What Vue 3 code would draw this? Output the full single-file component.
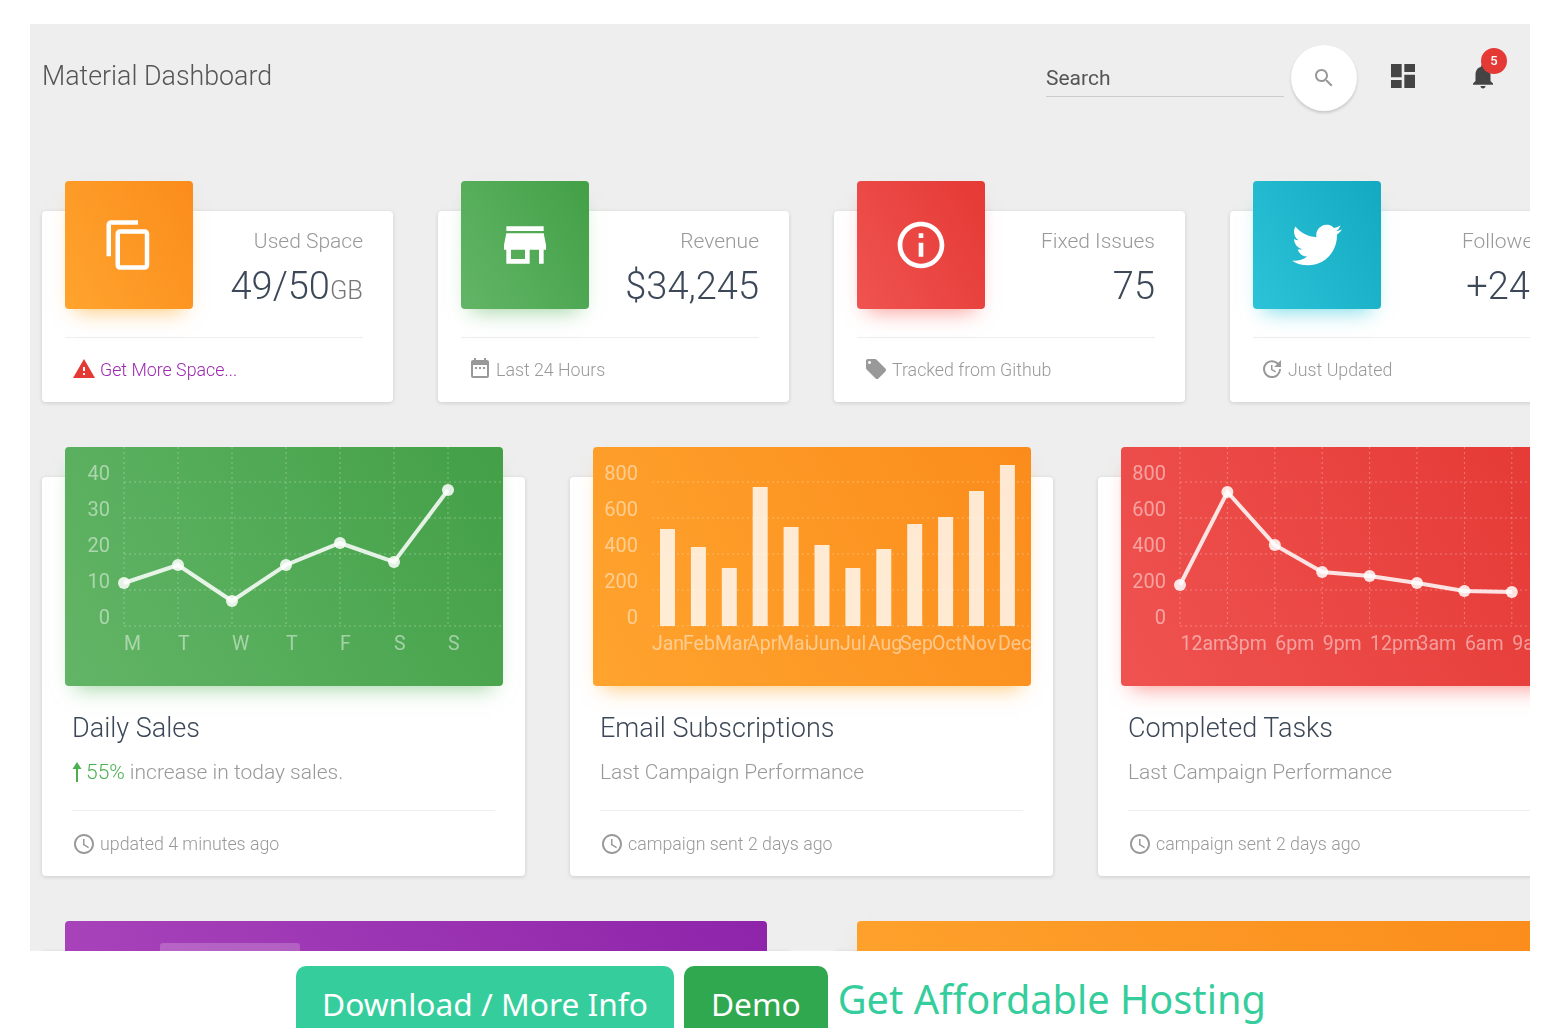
<template>
  <div class="page">
    <div class="panel">
      <nav class="topbar">
        <div class="brand">Material Dashboard</div>
        <div class="search">
          <span class="search-input">Search</span>
          <button class="search-btn">
            <svg viewBox="0 0 24 24" width="24" height="24"><path :d="icons.search" /></svg>
          </button>
        </div>
        <svg class="nav-icon dash" viewBox="0 0 24 24" width="32" height="32"><path :d="icons.dashboard" /></svg>
        <div class="bell">
          <svg class="nav-icon" viewBox="0 0 24 24" width="30" height="30"><path :d="icons.bell" /></svg>
          <span class="badge">5</span>
        </div>
      </nav>

      <section class="stats">
        <div v-for="s in stats" :key="s.label" class="card stat">
          <div class="stat-top">
            <div class="stat-icon" :class="s.color">
              <svg viewBox="0 0 24 24" :width="s.size" :height="s.size"><path :d="s.icon" /></svg>
            </div>
            <div class="stat-text">
              <p class="stat-label">{{ s.label }}</p>
              <h3 class="stat-value">{{ s.value }}<small v-if="s.unit">{{ s.unit }}</small></h3>
            </div>
          </div>
          <div class="foot">
            <svg viewBox="0 0 24 24" width="24" height="24" :class="{ warn: s.warn }"><path :d="s.footIcon" /></svg>
            <span :class="{ link: s.warn }">{{ s.foot }}</span>
          </div>
        </div>
      </section>

      <section class="charts">
        <div v-for="c in charts" :key="c.title" class="card chart-card">
          <div class="chart-head" :class="c.color">
            <svg class="plot" viewBox="0 0 438 239" width="438" height="239">
              <line v-for="y in gridY" :key="'h' + y" x1="59" x2="438" :y1="y" :y2="y" class="grid" />
              <template v-if="c.points">
                <line v-for="x in c.xs" :key="'v' + x" :x1="x" :x2="x" y1="0" y2="179" class="grid" />
                <polyline :points="linePoints(c)" class="line" />
                <circle v-for="(p, i) in c.points" :key="i" :cx="c.xs[i]" :cy="p" r="6" class="dot" />
              </template>
              <template v-if="c.bars">
                <rect v-for="(b, i) in c.bars" :key="i" :x="c.xs[i] - 7.5" :y="b" width="15" :height="179 - b" class="bar" />
              </template>
              <text v-for="(t, i) in c.yLabels" :key="t" x="45" :y="33 + i * 36" text-anchor="end" class="axis">{{ t }}</text>
              <text v-for="(t, i) in c.xLabels" :key="i" :x="c.labelXs[i]" y="203" class="axis axis-x">{{ t }}</text>
            </svg>
          </div>
          <div class="chart-body">
            <h4 class="chart-title">{{ c.title }}</h4>
            <p class="chart-sub">
              <template v-if="c.up">
                <svg class="up" viewBox="0 0 10 20" width="10" height="20"><path d="M5 0L9.500 7H6V20H4V7H.5z" /></svg>
                <span class="pct">55%</span> increase in today sales.
              </template>
              <template v-else>{{ c.sub }}</template>
            </p>
          </div>
          <div class="foot chart-foot">
            <svg viewBox="0 0 24 24" width="24" height="24"><path :d="icons.clock" /></svg>
            <span>{{ c.foot }}</span>
          </div>
        </div>
      </section>

      <section class="lower">
        <div class="card lower-card"><div class="lower-head purple"><span class="tab"></span></div></div>
        <div class="card lower-card"><div class="lower-head orange"></div></div>
      </section>
    </div>

    <div class="promo">
      <a class="btn btn-teal">Download / More Info</a>
      <a class="btn btn-green">Demo</a>
      <a class="hosting">Get Affordable Hosting</a>
    </div>
  </div>
</template>

<script setup>
const icons = {
  search: 'M15.5 14h-.79l-.28-.27C15.41 12.59 16 11.11 16 9.5 16 5.91 13.09 3 9.5 3S3 5.91 3 9.5 5.91 16 9.5 16c1.61 0 3.09-.59 4.23-1.57l.27.28v.79l5 4.99L20.49 19l-4.99-5zm-6 0C7.01 14 5 11.99 5 9.500S7.01 5 9.5 5 14 7.01 14 9.500 11.99 14 9.5 14z',
  dashboard: 'M3 13h8V3H3v10zm0 8h8v-6H3v6zm10 0h8V11h-8v10zm0-18v6h8V3h-8z',
  bell: 'M12 22c1.1 0 2-.9 2-2h-4c0 1.1.9 2 2 2zm6-6v-5c0-3.07-1.63-5.64-4.5-6.32V4c0-.83-.67-1.5-1.5-1.5s-1.5.67-1.5 1.5v.68C7.64 5.36 6 7.92 6 11v5l-2 2v1h16v-1l-2-2z',
  copy: 'M16 1H4c-1.1 0-2 .9-2 2v14h2V3h12V1zm3 4H8c-1.1 0-2 .9-2 2v14c0 1.1.9 2 2 2h11c1.1 0 2-.9 2-2V7c0-1.1-.9-2-2-2zm0 16H8V7h11v14z',
  store: 'M20 4H4v2h16V4zm1 10v-2l-1-5H4l-1 5v2h1v6h10v-6h4v6h2v-6h1zm-9 4H6v-4h6v4z',
  info: 'M11 17h2v-6h-2v6zm1-15C6.48 2 2 6.48 2 12s4.48 10 10 10 10-4.48 10-10S17.52 2 12 2zm0 18c-4.41 0-8-3.59-8-8s3.59-8 8-8 8 3.59 8 8-3.59 8-8 8zM11 9h2V7h-2v2z',
  twitter: 'M23.953 4.57a10 10 0 01-2.825.775 4.958 4.958 0 002.163-2.723c-.951.555-2.005.959-3.127 1.184a4.92 4.92 0 00-8.384 4.482C7.69 8.095 4.067 6.13 1.64 3.162a4.822 4.822 0 00-.666 2.475c0 1.71.87 3.213 2.188 4.096a4.904 4.904 0 01-2.228-.616v.06a4.923 4.923 0 003.946 4.827 4.996 4.996 0 01-2.212.085 4.936 4.936 0 004.604 3.417 9.867 9.867 0 01-6.102 2.105c-.39 0-.779-.023-1.17-.067a13.995 13.995 0 007.557 2.209c9.053 0 13.998-7.496 13.998-13.985 0-.21 0-.42-.015-.63A9.935 9.935 0 0024 4.59z',
  warning: 'M1 21h22L12 2 1 21zm12-3h-2v-2h2v2zm0-4h-2v-4h2v4z',
  calendar: 'M19 3h-1V1h-2v2H8V1H6v2H5c-1.11 0-1.99.9-1.99 2L3 19c0 1.1.89 2 2 2h14c1.1 0 2-.9 2-2V5c0-1.1-.9-2-2-2zm0 16H5V8h14v11zM9 10H7v2h2v-2zm4 0h-2v2h2v-2zm4 0h-2v2h2v-2z',
  tag: 'M21.41 11.58l-9-9C12.05 2.22 11.55 2 11 2H4c-1.1 0-2 .9-2 2v7c0 .55.22 1.05.59 1.42l9 9c.36.36.86.58 1.41.58.55 0 1.05-.22 1.41-.59l7-7c.37-.36.59-.86.59-1.41 0-.55-.23-1.06-.59-1.42zM5.5 7C4.67 7 4 6.33 4 5.5S4.67 4 5.5 4 7 4.67 7 5.5 6.33 7 5.5 7z',
  update: 'M21 10.12h-6.78l2.74-2.82c-2.73-2.7-7.15-2.8-9.88-.1-2.73 2.71-2.73 7.08 0 9.79 2.73 2.71 7.15 2.71 9.88 0C18.32 15.65 19 14.08 19 12.1h2c0 1.98-.88 4.55-2.64 6.29-3.51 3.48-9.21 3.48-12.72 0-3.5-3.47-3.53-9.11-.02-12.58 3.51-3.47 9.14-3.47 12.65 0L21 3v7.12zM12.5 8v4.25l3.5 2.08-.72 1.21L11 13V8h1.5z',
  clock: 'M11.99 2C6.47 2 2 6.48 2 12s4.47 10 9.99 10C17.52 22 22 17.52 22 12S17.52 2 11.99 2zM12 20c-4.42 0-8-3.58-8-8s3.58-8 8-8 8 3.58 8 8-3.58 8-8 8zm.5-13H11v6l5.25 3.15.75-1.23-4.5-2.67z'
}

const stats = [
  { label: 'Used Space', value: '49/50', unit: 'GB', color: 'orange', icon: icons.copy, size: 54, foot: 'Get More Space...', footIcon: icons.warning, warn: true },
  { label: 'Revenue', value: '$34,245', color: 'green', icon: icons.store, size: 56, foot: 'Last 24 Hours', footIcon: icons.calendar },
  { label: 'Fixed Issues', value: '75', color: 'red', icon: icons.info, size: 56, foot: 'Tracked from Github', footIcon: icons.tag },
  { label: 'Followers', value: '+245', color: 'blue', icon: icons.twitter, size: 50, foot: 'Just Updated', footIcon: icons.update }
]

const gridY = [35, 71, 107, 143, 179]

const step = (start, gap, n) => Array.from({ length: n }, (_, i) => start + gap * i)

const charts = [
  {
    title: 'Daily Sales',
    up: true,
    foot: 'updated 4 minutes ago',
    color: 'green',
    yLabels: [40, 30, 20, 10, 0],
    xs: step(59, 54, 7),
    labelXs: step(59, 54, 7),
    xLabels: ['M', 'T', 'W', 'T', 'F', 'S', 'S'],
    points: [136, 118, 154, 118, 96, 115, 43]
  },
  {
    title: 'Email Subscriptions',
    sub: 'Last Campaign Performance',
    foot: 'campaign sent 2 days ago',
    color: 'orange',
    yLabels: [800, 600, 400, 200, 0],
    xs: step(74.5, 30.9, 12),
    labelXs: [59, 90, 122, 154, 184, 215, 247, 275, 307, 339, 369, 405],
    xLabels: ['Jan', 'Feb', 'Mar', 'Apr', 'Mai', 'Jun', 'Jul', 'Aug', 'Sep', 'Oct', 'Nov', 'Dec'],
    bars: [82, 100, 121, 40, 80, 98, 121, 102, 77, 70, 44, 18]
  },
  {
    title: 'Completed Tasks',
    sub: 'Last Campaign Performance',
    foot: 'campaign sent 2 days ago',
    color: 'red',
    yLabels: [800, 600, 400, 200, 0],
    xs: step(59, 47.4, 8),
    labelXs: step(59.5, 47.4, 8),
    xLabels: ['12am', '3pm', '6pm', '9pm', '12pm', '3am', '6am', '9am'],
    points: [138, 45, 98, 125, 129, 136, 144, 145]
  }
]

const linePoints = (c) => c.points.map((p, i) => `${c.xs[i]},${p}`).join(' ')
</script>

<style>
html, body {
  margin: 0;
  background: #fff;
  overflow: hidden;
}
</style>

<style scoped>
.page {
  height: 1028px;
  overflow: hidden;
  padding: 24px 16px 0 30px;
  box-sizing: border-box;
  font-family: Roboto, "Liberation Sans", sans-serif;
}

/* the whole panel is soft in the reference */
.panel {
  width: 1500px;
  height: 927px;
  overflow: hidden;
  padding-left: 12px;
  box-sizing: border-box;
  background: #eee;
  filter: blur(0.5px);
}

.topbar {
  display: flex;
  align-items: center;
  height: 104px;
  width: 1476px;
}

.brand {
  font-size: 26.8px;
  font-weight: 300;
  color: #555;
  margin-right: auto;
}

.search {
  display: flex;
  align-items: center;
  margin-top: 4px;
}

.search-input {
  width: 238px;
  height: 42px;
  line-height: 46px;
  font-size: 21px;
  color: #555;
  border-bottom: 1px solid #ccc;
  box-sizing: border-box;
  margin-top: -4px;
  margin-right: 7px;
}

.search-btn {
  width: 66px;
  height: 66px;
  border: 0;
  padding: 0;
  border-radius: 50%;
  background: #fff;
  display: flex;
  align-items: center;
  justify-content: center;
  box-shadow: 0 2px 3px rgba(0, 0, 0, 0.16);
}

.search-btn path {
  fill: #999;
}

.nav-icon path {
  fill: #444;
}

.dash {
  margin-left: 30px;
  margin-right: 49px;
}

.bell {
  position: relative;
  width: 30px;
  height: 30px;
  margin-right: 20px;
}

.badge {
  position: absolute;
  top: -13px;
  left: 13px;
  width: 26px;
  height: 26px;
  border-radius: 50%;
  background: #e53935;
  color: #fff;
  font-size: 13px;
  font-weight: 500;
  line-height: 26px;
  text-align: center;
}

.card {
  background: #fff;
  border-radius: 4px;
  box-shadow: 0 1px 4px rgba(0, 0, 0, 0.14);
}

.stats {
  display: grid;
  grid-template-columns: repeat(4, 351px);
  column-gap: 45px;
  padding-top: 83px;
}

.stat {
  height: 191px;
}

.stat-top {
  display: flex;
  justify-content: space-between;
  height: 126px;
  margin: 0 30px 0 22.500px;
  border-bottom: 1px solid #eee;
}

.stat-icon {
  width: 128.500px;
  height: 128px;
  margin-top: -30px;
  flex: none;
  border-radius: 4px;
  display: flex;
  align-items: center;
  justify-content: center;
}

.stat-icon path {
  fill: #fff;
}

.stat-text {
  text-align: right;
  white-space: nowrap;
}

.stat-label {
  margin: 18px 0 0;
  font-size: 21px;
  line-height: 24px;
  font-weight: 300;
  color: #999;
}

.stat-value {
  margin: 11px 0 0;
  font-size: 38px;
  line-height: 44px;
  font-weight: 300;
  color: #3c4858;
}

.stat-value small {
  font-size: 25.500px;
  color: #777;
  font-weight: 300;
}

.orange {
  background: linear-gradient(60deg, #ffa42e, #fb8c1c);
  box-shadow: 0 12px 20px -10px rgba(255, 152, 0, 0.55);
}

.green {
  background: linear-gradient(60deg, #62b566, #43a047);
  box-shadow: 0 12px 20px -10px rgba(76, 175, 80, 0.55);
}

.red {
  background: linear-gradient(60deg, #ef5350, #e53935);
  box-shadow: 0 12px 20px -10px rgba(244, 67, 54, 0.55);
}

.blue {
  background: linear-gradient(60deg, #2cc2d8, #13a9c0);
  box-shadow: 0 12px 20px -10px rgba(0, 188, 212, 0.55);
}

.purple {
  background: linear-gradient(60deg, #ab47bc, #8e24aa);
}

.foot {
  display: flex;
  align-items: center;
  gap: 4px;
  height: 24px;
  margin: 19px 0 0 30px;
  font-size: 17.800px;
  font-weight: 300;
  color: #999;
}

.foot path {
  fill: #999;
}

.foot .warn path {
  fill: #e53935;
}

.link {
  color: #9c27b0;
}

.charts {
  display: grid;
  grid-template-columns: repeat(3, 483px);
  column-gap: 45px;
  padding-top: 75px;
}

.chart-card {
  height: 399px;
}

.chart-head {
  width: 438px;
  height: 239px;
  margin: -30px 0 0 23px;
  border-radius: 4px;
  overflow: hidden;
}

.plot {
  display: block;
}

.grid {
  stroke: rgba(255, 255, 255, 0.3);
  stroke-width: 1;
  stroke-dasharray: 2 3;
}

.line {
  fill: none;
  stroke: rgba(255, 255, 255, 0.85);
  stroke-width: 4;
}

.dot {
  fill: rgba(255, 255, 255, 0.85);
}

.bar {
  fill: rgba(255, 255, 255, 0.8);
}

.axis {
  font-size: 20px;
  fill: rgba(255, 255, 255, 0.48);
}

.axis-x {
  font-size: 19.500px;
}

.chart-body {
  padding: 26px 30px 0;
  height: 98px;
}

.chart-title {
  margin: 0;
  font-size: 27px;
  line-height: 32px;
  font-weight: 300;
  color: #3c4858;
  white-space: nowrap;
}

.chart-sub {
  margin: 16px 0 0;
  font-size: 21px;
  line-height: 24px;
  font-weight: 300;
  color: #999;
  white-space: nowrap;
  display: flex;
  align-items: center;
}

.up {
  margin-right: 4px;
}

.up path {
  fill: #4caf50;
}

.pct {
  color: #4caf50;
  margin-right: 5px;
}

.chart-foot {
  margin: 0 30px 0 30px;
  padding-top: 21px;
  height: 45px;
  box-sizing: border-box;
  border-top: 1px solid #eee;
}

.lower {
  display: grid;
  grid-template-columns: 748px 748px;
  column-gap: 44px;
  padding-top: 75px;
}

.lower-card {
  height: 300px;
}

.lower-head {
  height: 200px;
  margin: -30px 23px 0;
  border-radius: 4px;
  padding: 22px 0 0 95px;
  box-sizing: border-box;
}

.tab {
  display: block;
  width: 140px;
  height: 40px;
  border-radius: 3px;
  background: rgba(255, 255, 255, 0.2);
}

.promo {
  display: flex;
  align-items: flex-start;
  margin-top: 15px;
  margin-left: 266px;
  font-family: "Noto Sans", "Open Sans", sans-serif;
}

.btn {
  height: 90px;
  padding: 19px 26px 0;
  box-sizing: border-box;
  border-radius: 10px 10px 0 0;
  color: #fff;
  font-size: 31.700px;
  line-height: 38px;
  white-space: nowrap;
}

.btn-teal {
  background: #36cd9c;
  margin-right: 10px;
}

.btn-green {
  background: #2fa84f;
  padding-left: 27px;
  padding-right: 27px;
}

.hosting {
  margin-left: 10px;
  color: #36cd9c;
  font-size: 39.700px;
  line-height: 66px;
  white-space: nowrap;
}
</style>
